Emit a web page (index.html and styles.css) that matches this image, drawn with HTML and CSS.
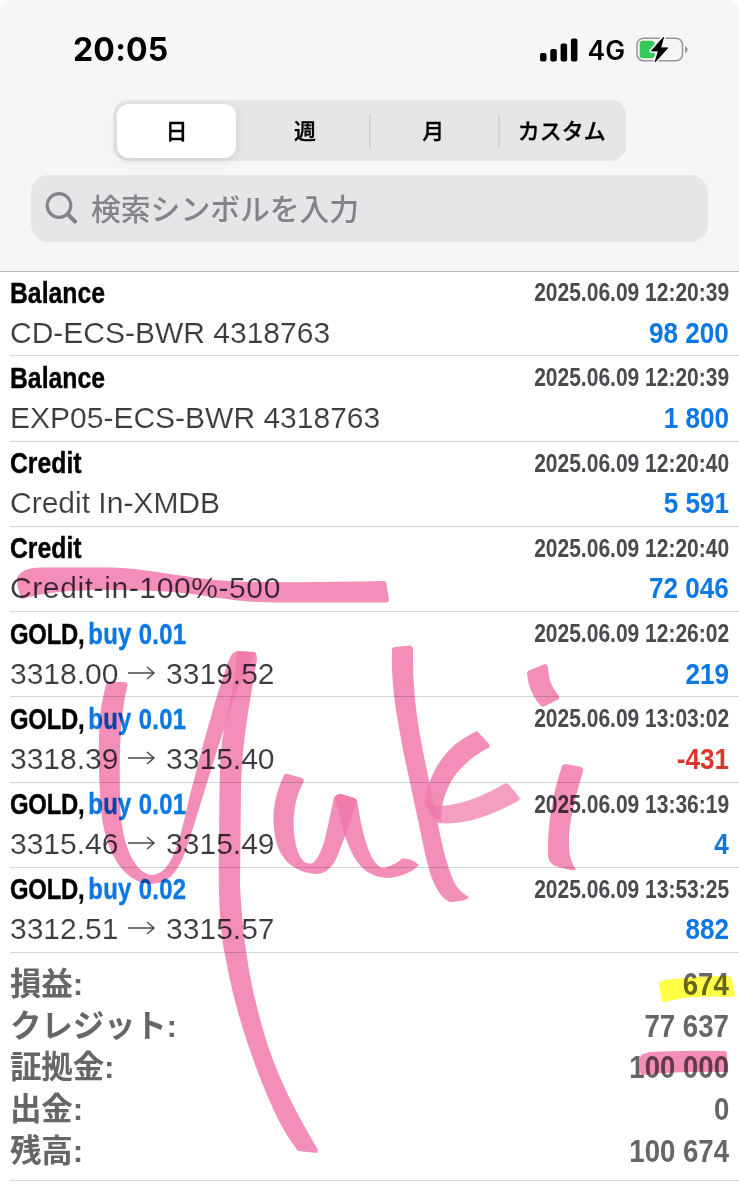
FILE: index.html
```html
<!DOCTYPE html>
<html lang="ja">
<head>
    <meta charset="UTF-8">
    <meta name="viewport" content="width=device-width, initial-scale=1.0">
    <title>履歴</title>
    <link rel="stylesheet" href="styles.css">
</head>
<body>

<header class="header">
    <div class="status-bar">
        <span class="clock">20:05</span>
        <div class="status-icons">
            <svg class="signal" width="38" height="24" viewBox="0 0 38 24">
                <rect x="0" y="15" width="6.5" height="8.5" rx="2"/>
                <rect x="10.3" y="11" width="6.5" height="12.5" rx="2"/>
                <rect x="20.6" y="5.5" width="6.5" height="18" rx="2"/>
                <rect x="30.9" y="0.5" width="6.5" height="23" rx="2"/>
            </svg>
            <span class="network">4G</span>
            <svg class="battery" width="53" height="28" viewBox="0 0 53 28">
                <rect x="1" y="2.2" width="45.5" height="22.6" rx="6.5" fill="none" stroke="#98989a" stroke-width="1.5"/>
                <path d="M49 10q2.700 1.200 2.700 3.500t-2.700 3.500z" fill="#98989a"/>
                <rect x="3.7" y="4.8" width="15" height="17.4" rx="3.5" fill="#34c759"/>
                <path d="M27.500 1.300 15.500 14.900h7l-3.300 10.800 12.600-13.800h-7.300z" fill="#000" stroke="#f6f6f6" stroke-width="4" stroke-linejoin="round" paint-order="stroke"/>
                <path d="M27.500 1.300 15.500 14.900h7l-3.300 10.800 12.600-13.800h-7.300z" fill="#000" stroke="#000" stroke-width="1" stroke-linejoin="round"/>
            </svg>
        </div>
    </div>

    <div class="tabs">
        <button class="tab active">日</button>
        <button class="tab">週</button>
        <button class="tab">月</button>
        <button class="tab">カスタム</button>
    </div>

    <div class="search">
        <svg width="34" height="34" viewBox="0 0 34 34" fill="none" stroke="#838388">
            <circle cx="14" cy="13.500" r="11.800" stroke-width="3.200"/>
            <path d="M22.700 22.200l7.300 7.300" stroke-width="4.200" stroke-linecap="round"/>
        </svg>
        <span class="placeholder">検索シンボルを入力</span>
    </div>
</header>

<main class="history">
    <div class="row">
        <div class="line"><b class="name">Balance</b><span class="date">2025.06.09 12:20:39</span></div>
        <div class="line"><span class="detail">CD-ECS-BWR 4318763</span><span class="amount">98 200</span></div>
    </div>
    <div class="row">
        <div class="line"><b class="name">Balance</b><span class="date">2025.06.09 12:20:39</span></div>
        <div class="line"><span class="detail">EXP05-ECS-BWR 4318763</span><span class="amount">1 800</span></div>
    </div>
    <div class="row">
        <div class="line"><b class="name">Credit</b><span class="date">2025.06.09 12:20:40</span></div>
        <div class="line"><span class="detail">Credit In-XMDB</span><span class="amount">5 591</span></div>
    </div>
    <div class="row">
        <div class="line"><b class="name">Credit</b><span class="date">2025.06.09 12:20:40</span></div>
        <div class="line"><span class="detail spaced">Credit-in-100%-500</span><span class="amount">72 046</span></div>
    </div>
    <div class="row">
        <div class="line"><b class="name gold">GOLD, <span class="side">buy 0.01</span></b><span class="date">2025.06.09 12:26:02</span></div>
        <div class="line"><span class="detail">3318.00 <svg class="arrow" viewBox="0 0 28 16"><path d="M0 8h26M19 2l7 6-7 6"/></svg> 3319.52</span><span class="amount">219</span></div>
    </div>
    <div class="row">
        <div class="line"><b class="name gold">GOLD, <span class="side">buy 0.01</span></b><span class="date">2025.06.09 13:03:02</span></div>
        <div class="line"><span class="detail">3318.39 <svg class="arrow" viewBox="0 0 28 16"><path d="M0 8h26M19 2l7 6-7 6"/></svg> 3315.40</span><span class="amount loss">-431</span></div>
    </div>
    <div class="row">
        <div class="line"><b class="name gold">GOLD, <span class="side">buy 0.01</span></b><span class="date">2025.06.09 13:36:19</span></div>
        <div class="line"><span class="detail">3315.46 <svg class="arrow" viewBox="0 0 28 16"><path d="M0 8h26M19 2l7 6-7 6"/></svg> 3315.49</span><span class="amount">4</span></div>
    </div>
    <div class="row">
        <div class="line"><b class="name gold">GOLD, <span class="side">buy 0.02</span></b><span class="date">2025.06.09 13:53:25</span></div>
        <div class="line"><span class="detail">3312.51 <svg class="arrow" viewBox="0 0 28 16"><path d="M0 8h26M19 2l7 6-7 6"/></svg> 3315.57</span><span class="amount">882</span></div>
    </div>

    <div class="summary">
        <div class="total"><span class="label">損益:</span><span class="sum">674</span></div>
        <div class="total"><span class="label">クレジット:</span><span class="sum">77 637</span></div>
        <div class="total"><span class="label">証拠金:</span><span class="sum">100 000</span></div>
        <div class="total"><span class="label">出金:</span><span class="sum">0</span></div>
        <div class="total"><span class="label">残高:</span><span class="sum">100 674</span></div>
    </div>
</main>

<!-- Marker strokes over the list -->
<svg class="marker" width="739" height="1200" viewBox="0 0 739 1200">
    <g class="pink">
        <path d="M17 578C20 571 28 568 40 567.5H110C150 568 190 580 240 581.5Q300 583 384 581Q386 581 386.500 584L389 600Q389 602.500 386 602.500H283C220 603 210 592 140 590.500C90 589 50 590 22 599Q17 590 17 578Z"/>
        <path d="M106 684Q106 681.500 109 682L125 682Q128 682.500 127.500 685C119 720 119.500 760 120 800C121 850 137 874 152 875C176 874 182 826 191 791C203 745 217 692 229 660Q232 652 237 651L253 652Q256 652 256 655C240 675 233 703 223 732C208 778 196 820 187 847C179 870 170 884 150 884C122 882 105 850 101 810C98 770 98 725 102 702Z"/>
        <path d="M237 653Q237 651 240 651L254 652Q257 653 257 659C252 692 243 730 241 785L240 885C242 925 247 980 267 1043C281 1085 298 1116 318 1150L317 1153L298 1151C282 1130 271 1106 261 1080C247 1045 233 1000 226 960C217 920 219 870 219 840C220 790 218 750 226 720C233 690 235 675 237 653Z"/>
        <path d="M284 775Q285 773 288 774L302 778Q305 779 303 783C291 805 292 834 298 852Q303 866 313 863C325 853 328 822 334 798Q336 794 341 794L354 798Q358 799 356 803C350 824 343 842 337 857Q330 873 317 874C295 873 279 860 275 836C271 814 275 794 284 775Z"/>
        <path d="M335 797Q337 794 341 794L354 798Q357 799 357.500 803C362 832 370 867 384 868Q395 865 402 858.500Q412 858 419 865Q410 875 390 878C360 878 351 854 343 830Z"/>
        <path d="M392 650Q392 647 395 647L410 645.500Q413 646 413 650C412 715 425 757 435 810C441 840 447 870 457 887Q463 894 469 897Q468 901 450 902C430 894 425 850 419 825L403 750C397 715 391 690 392 650Z"/>
        <path d="M475 732Q477 730 479 733L489 744Q491 747 488 748C462 762 441 784 441 822Q428 813 425 801C430 766 451 743 475 732Z"/>
        <path d="M440 806C467 804 486 794 504 784Q508 782 510 786L519 797Q521 799 518 801C493 815 464 826 438 823Q427 812 425 801Q430 807 440 806Z" opacity=".85"/>
        <path d="M527 673Q527 671 530 670L545 664Q547 664 548 667C549 682 552 687 559 696Q560 699 557 700L545 706Q542 708 540 705C531 694 528 684 527 673Z"/>
        <path d="M562 766Q563 764 566 764L581 767Q584 768 583 771C577 793 568 820 569 845Q569 861 576 869Q575 872 563 868Q549 866 548 856C547 825 553 793 562 766Z"/>
        <path d="M640 1058Q640 1054 650 1052Q690 1050 725 1051Q727 1051 727 1054L728 1072Q680 1071 642 1075Q639 1075 640 1058Z"/>
    </g>
    <path class="yellow" d="M659 985Q659 981 665 980Q700 976 728 976Q731 976 732 979L735 994Q735 997 731 997Q690 995 665 1002Q662 1002 662 1000Z"/>
</svg>

</body>
</html>
```
FILE: styles.css
```css
body {
    font-family: "Liberation Sans", "Noto Sans CJK JP", sans-serif;
    background: #fff;
    margin: 0;
    height: 1200px;
    position: relative;
    overflow: hidden;
}
.header {
    background: #f6f6f6;
    height: 272px;
    border-bottom: 1px solid #b8b8ba;
    border-radius: 10px 10px 0 0;
    box-sizing: border-box;
}
.status-bar {
    display: flex;
    justify-content: space-between;
    align-items: center;
    height: 99px;
    padding: 0 50px 0 73px;
    box-sizing: border-box;
}
.clock {
    font: 700 32px Inter, sans-serif;
    letter-spacing: 0.2px;
}
.status-icons {
    display: flex;
    align-items: center;
}
.network {
    font: 600 26.5px Inter, sans-serif;
    margin: 1px 11px 0 10px;
}
.tabs {
    display: grid;
    grid-template-columns: 124px 128px 128.500px 128.500px;
    width: 513px;
    height: 61px;
    margin: 1px 0 0 113px;
    padding: 4px 0 3px 4px;
    box-sizing: border-box;
    background: #e6e6e8;
    border-radius: 15px;
}
.tab {
    background: none;
    border: none;
    padding: 0 0 4px;
    font: 500 22px "Noto Sans CJK JP", sans-serif;
    color: #000;
    -webkit-text-stroke: 0.3px #000;
}
.tab.active {
    background: #fff;
    border-radius: 12px;
    width: 119px;
    box-shadow: 0 3px 8px rgba(0, 0, 0, 0.1);
}
.tab + .tab + .tab {
    background: linear-gradient(#cdcdd0, #cdcdd0) 0 center / 1.5px 34px no-repeat;
}
.search {
    display: flex;
    align-items: center;
    gap: 12px;
    height: 67px;
    margin: 14px 31px 0;
    padding-left: 14px;
    background: #e6e6e8;
    border-radius: 18px;
    color: #838388;
}
.placeholder {
    font: 500 29.8px "Noto Sans CJK JP", sans-serif;
    padding-bottom: 3px;
}
.history {
    margin-top: -1px;
    padding-left: 10px;
}
.row {
    height: 85.25px;
    padding: 1.5px 10px 0 0;
    box-sizing: border-box;
    border-bottom: 1px solid #d6d6d8;
}
.line {
    display: flex;
    justify-content: space-between;
    align-items: center;
    height: 40px;
    white-space: nowrap;
}
.name {
    font-size: 30px;
    transform: scaleX(0.825);
    transform-origin: left;
    -webkit-text-stroke: 0.4px;
}
.gold {
    transform: scaleX(0.795);
    letter-spacing: -0.3px;
}
.side {
    color: #0b78e3;
    margin-left: -3px;
    letter-spacing: 0.4px;
}
.date {
    font-size: 25px;
    font-weight: bold;
    color: #4a4a4f;
    transform: scaleX(0.84);
    transform-origin: right;
}
.detail {
    font-size: 30px;
    color: #3c3c40;
    -webkit-text-stroke: 0.15px #fff;
}
.spaced {
    letter-spacing: 0.6px;
}
.arrow {
    width: 28px;
    height: 16px;
    margin: 0 1.5px;
    vertical-align: 3px;
    fill: none;
    stroke: #4a4a4f;
    stroke-width: 1.5;
}
.amount {
    font-size: 30px;
    font-weight: bold;
    color: #0b78e3;
    transform: scaleX(0.87);
    transform-origin: right;
}
.loss {
    color: #d9392b;
}
.summary {
    height: 228px;
    padding: 10px 10px 0 0;
    box-sizing: border-box;
    border-bottom: 1px solid #d6d6d8;
}
.total {
    display: flex;
    justify-content: space-between;
    align-items: center;
    height: 41.7px;
    font-size: 31px;
    font-weight: bold;
    color: #666;
    white-space: nowrap;
}
.label {
    font-size: 32px;
    line-height: 40px;
    letter-spacing: -0.2px;
    transform: scaleX(0.985);
    transform-origin: left;
}
.sum {
    transform: scaleX(0.89);
    transform-origin: right;
    padding-top: 2px;
}
.marker {
    position: absolute;
    top: 0;
    left: 0;
    mix-blend-mode: multiply;
    pointer-events: none;
}
.pink {
    fill: #f07aaa;
    fill-opacity: 0.85;
}
.yellow {
    fill: #ffff48;
}
```
